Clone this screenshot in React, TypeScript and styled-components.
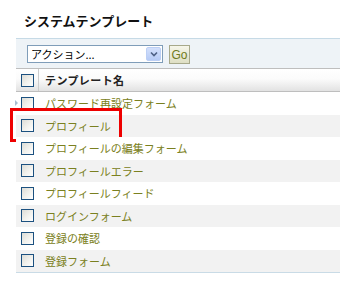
import React from "react";
import styled, { createGlobalStyle } from "styled-components";

const GlobalStyle = createGlobalStyle`
  body {
    margin: 0;
    background: #ffffff;
    font-family: "Noto Sans CJK JP", "Noto Sans", sans-serif;
  }
`;

const Page = styled.div`
  padding: 12px 0 0 16px;
  width: 324px;
`;

const Title = styled.h1`
  margin: 0 0 8px;
  padding-left: 8px;
  font-size: 13px;
  line-height: 18px;
  font-weight: bold;
  color: #111111;
`;

const Toolbar = styled.div`
  display: flex;
  align-items: flex-start;
  height: 31px;
  box-sizing: border-box;
  padding: 6px 0 0 11px;
  background: #eef3f7;
  border-top: 1px solid #c6dae6;
  border-bottom: 1px solid #bebebe;
`;

const FakeSelect = styled.div`
  display: flex;
  align-items: center;
  width: 136px;
  height: 18px;
  box-sizing: border-box;
  border: 1px solid #7f9db9;
  background: #ffffff;
  font-size: 11px;
  color: #000000;
`;

const SelectLabel = styled.span`
  flex: 1;
  padding-left: 3px;
  line-height: 16px;
  white-space: nowrap;
`;

const SelectArrow = styled.span`
  display: flex;
  align-items: center;
  justify-content: center;
  width: 15px;
  height: 14px;
  margin-right: 1px;
  border-radius: 2px;
  background: linear-gradient(180deg, #d3e0fc 0%, #b6cbf6 100%);
  border: 1px solid #bccff5;
  box-sizing: border-box;
`;

const GoButton = styled.button`
  margin-left: 6px;
  width: 21px;
  height: 19px;
  padding: 0;
  border: 1px solid #a7a98b;
  background: linear-gradient(180deg, #f6f6ea 0%, #dedfc4 100%);
  color: #6f7a20;
  font-family: "Liberation Sans", sans-serif;
  font-size: 12px;
  line-height: 16px;
`;

const HeaderRow = styled.div`
  display: flex;
  align-items: center;
  height: 22px;
  background: linear-gradient(180deg, #ffffff 0%, #fbfbfb 45%, #e2e2e2 100%);
  border-bottom: 1px solid #bebebe;
`;

const CheckCell = styled.div<{ $divider?: boolean }>`
  display: flex;
  align-items: center;
  width: 23px;
  height: 100%;
  box-sizing: border-box;
  padding-left: 5px;
  border-right: ${(p) => (p.$divider ? "1px solid #cdcdcd" : "none")};
`;

const HeaderText = styled.span`
  padding-left: 6px;
  font-size: 11px;
  letter-spacing: 0.4px;
  font-weight: bold;
  color: #222222;
`;

const Checkbox = styled.span`
  display: block;
  width: 13px;
  height: 13px;
  box-sizing: border-box;
  border: 1px solid #1c5180;
  background: linear-gradient(135deg, #dcdcd6 0%, #f2f2ee 55%, #ffffff 100%);
`;

const List = styled.div`
  border-bottom: 1px solid #c9dbe6;
`;

const Row = styled.div<{ $odd: boolean }>`
  position: relative;
  display: flex;
  align-items: center;
  height: 22.5px;
  background: ${(p) => (p.$odd ? "#f2f2f2" : "#ffffff")};
`;

const RowText = styled.span`
  padding-left: 6px;
  font-size: 11px;
  color: #7a8020;
  white-space: nowrap;
`;

const Pointer = styled.span`
  position: absolute;
  left: -1px;
  top: 8px;
  width: 0;
  height: 0;
  border-top: 3px solid transparent;
  border-bottom: 3px solid transparent;
  border-left: 3px solid #a9bdd0;
`;

const Highlight = styled.span`
  position: absolute;
  left: -6px;
  top: -7px;
  width: 112px;
  height: 34px;
  box-sizing: border-box;
  border: 3px solid #ee0000;
  pointer-events: none;
`;

const templates = [
  "パスワード再設定フォーム",
  "プロフィール",
  "プロフィールの編集フォーム",
  "プロフィールエラー",
  "プロフィールフィード",
  "ログインフォーム",
  "登録の確認",
  "登録フォーム",
];

const App: React.FC = () => (
  <>
    <GlobalStyle />
    <Page>
      <Title>システムテンプレート</Title>
      <Toolbar>
        <FakeSelect>
          <SelectLabel>アクション...</SelectLabel>
          <SelectArrow>
            <svg width="8" height="6" viewBox="0 0 8 6">
              <path d="M1 1.5 L4 4.5 L7 1.5" fill="none" stroke="#4d6185" strokeWidth="1.6" />
            </svg>
          </SelectArrow>
        </FakeSelect>
        <GoButton>Go</GoButton>
      </Toolbar>
      <HeaderRow>
        <CheckCell $divider>
          <Checkbox />
        </CheckCell>
        <HeaderText>テンプレート名</HeaderText>
      </HeaderRow>
      <List>
        {templates.map((name, i) => (
          <Row key={name} $odd={i % 2 === 1}>
            {i === 0 && <Pointer />}
            {i === 1 && <Highlight />}
            <CheckCell>
              <Checkbox />
            </CheckCell>
            <RowText>{name}</RowText>
          </Row>
        ))}
      </List>
    </Page>
  </>
);

export default App;
